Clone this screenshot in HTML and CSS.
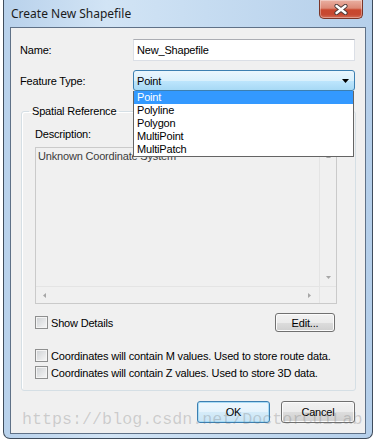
FILE: index.html
```html
<!DOCTYPE html>
<html lang="en">
<head>
    <meta charset="UTF-8">
    <meta name="viewport" content="width=device-width, initial-scale=1.0">
    <title>Create New Shapefile</title>
    <link rel="stylesheet" href="styles.css">
</head>
<body>
    <div class="window">
        <div class="titlebar">
            <span class="title">Create New Shapefile</span>
            <div class="close-btn">
                <svg width="14" height="11" viewBox="0 0 14 11">
                    <path d="M2.5 2 L11.5 9 M11.5 2 L2.5 9" stroke="#4a3a38" stroke-width="4.2" stroke-linecap="round"/>
                    <path d="M2.5 2 L11.5 9 M11.5 2 L2.5 9" stroke="#fff" stroke-width="2.4" stroke-linecap="round"/>
                </svg>
            </div>
        </div>
        <div class="client">
            <div class="field-row">
                <label class="field-label" for="name">Name:</label>
                <div class="textbox" id="name">New_Shapefile</div>
            </div>
            <div class="field-row type-row">
                <label class="field-label">Feature Type:</label>
                <div class="combo">
                    <span>Point</span>
                    <svg class="combo-arrow" width="7" height="4" viewBox="0 0 7 4">
                        <path d="M0 0 H7 L3.5 4 Z" fill="#000"/>
                    </svg>
                    <ul class="droplist">
                        <li class="selected">Point</li>
                        <li>Polyline</li>
                        <li>Polygon</li>
                        <li>MultiPoint</li>
                        <li>MultiPatch</li>
                    </ul>
                </div>
            </div>
            <fieldset class="group">
                <legend>Spatial Reference</legend>
                <div class="desc-label">Description:</div>
                <div class="desc-box">
                    <div class="desc-main">
                        <div class="desc-text">Unknown Coordinate System</div>
                        <div class="vscroll">
                            <svg width="5" height="3" viewBox="0 0 5 3"><path d="M0 3 H5 L2.5 0 Z" fill="#a6a6a6"/></svg>
                            <svg width="5" height="3" viewBox="0 0 5 3"><path d="M0 0 H5 L2.5 3 Z" fill="#a6a6a6"/></svg>
                        </div>
                    </div>
                    <div class="hscroll-row">
                        <div class="hscroll">
                            <svg width="3" height="5" viewBox="0 0 3 5"><path d="M3 0 V5 L0 2.5 Z" fill="#a6a6a6"/></svg>
                            <svg width="3" height="5" viewBox="0 0 3 5"><path d="M0 0 V5 L3 2.5 Z" fill="#a6a6a6"/></svg>
                        </div>
                        <div class="corner"></div>
                    </div>
                </div>
                <div class="details-row">
                    <label class="check"><span class="box"></span>Show Details</label>
                    <button class="btn edit-btn">Edit...</button>
                </div>
                <label class="check m-row"><span class="box"></span>Coordinates will contain M values. Used to store route data.</label>
                <label class="check"><span class="box"></span>Coordinates will contain Z values. Used to store 3D data.</label>
            </fieldset>
            <div class="dialog-buttons">
                <button class="btn ok-btn">OK</button>
                <button class="btn cancel-btn">Cancel</button>
            </div>
        </div>
        <div class="watermark">https://blog.csdn.net/DoctorCuiLab</div>
    </div>
</body>
</html>
```

FILE: styles.css
```css
body {
    margin: 0;
    background: #fff;
    font-family: "Liberation Sans", Arial, sans-serif;
    font-size: 11px;
    letter-spacing: -0.18px;
    color: #000;
}
.window {
    position: relative;
    box-sizing: border-box;
    width: 370px;
    height: 439px;
    margin-left: 3px;
    padding: 0 6px 4px;
    border: 1px solid #3f4c5c;
    border-top: none;
    border-radius: 0 0 7px 7px;
    background: linear-gradient(to right, #b8d1eb, #d2e4f5 28%, #c6dcf1 55%, #b5cfea);
}
.titlebar {
    height: 27px;
    display: flex;
    justify-content: space-between;
    align-items: flex-start;
}
.title {
    padding: 5px 0 0 1px;
    font-family: "Noto Sans", sans-serif;
    font-size: 12px;
    letter-spacing: 0;
    color: #1b1b1b;
}
.close-btn {
    width: 44px;
    height: 19px;
    box-sizing: border-box;
    margin-right: 3px;
    display: flex;
    align-items: center;
    justify-content: center;
    border: 1px solid #7a3528;
    border-top: none;
    border-radius: 0 0 5px 5px;
    background: linear-gradient(#eab0a2 0%, #dc8a77 45%, #c9472e 55%, #c64831 80%, #d46d55 100%);
    box-shadow: inset 0 0 0 1px rgba(255, 255, 255, 0.35);
}
.client {
    box-sizing: border-box;
    height: 407px;
    padding: 11px 10px 0 9px;
    border: 1px solid #5f7187;
    background: #f0f0f0;
}
.field-row {
    display: flex;
    align-items: center;
    height: 22px;
}
.type-row {
    height: 21px;
    margin-top: 9px;
}
.field-label {
    width: 113px;
}
.textbox {
    box-sizing: border-box;
    width: 222px;
    height: 22px;
    padding: 3px 3px 0;
    line-height: 15px;
    background: #fff;
    border: 1px solid #dbdfe6;
    border-top-color: #abadb3;
}
.combo {
    position: relative;
    box-sizing: border-box;
    width: 222px;
    height: 21px;
    padding: 0 5px 0 3px;
    display: flex;
    align-items: center;
    justify-content: space-between;
    border: 1px solid #3c7fb1;
    border-radius: 3px;
    background: linear-gradient(#eaf6fd 0%, #d9f0fc 50%, #bee6fd 50%, #a7d9f5 100%);
}
.droplist {
    position: absolute;
    top: calc(100% + 1px);
    left: -1px;
    right: 0;
    margin: 0;
    padding: 0;
    list-style: none;
    background: #fff;
    border: 1px solid #646464;
    border-top: none;
    z-index: 2;
}
.droplist li {
    height: 13px;
    line-height: 13px;
    padding-left: 3px;
}
.droplist .selected {
    background: #3399ff;
    color: #fff;
}
.group {
    margin: 14px -1px 0 1px;
    padding: 10px 18px 9px 13px;
    border: 1px solid #d5dfe5;
    border-radius: 3px;
    box-shadow: inset 1px 1px 0 #fff;
}
.group legend {
    margin-left: -6px;
    padding: 0 3px;
    line-height: 13px;
}
.desc-label {
    line-height: 13px;
}
.desc-box {
    box-sizing: border-box;
    height: 157px;
    margin-top: 6px;
    display: flex;
    flex-direction: column;
    border: 1px solid #cacaca;
    background: #f0f0f0;
}
.desc-main {
    flex: 1;
    display: flex;
}
.desc-text {
    flex: 1;
    padding: 2px 2px 0;
    line-height: 13px;
    color: #3c3c3c;
}
.vscroll {
    width: 16px;
    border-left: 1px solid #e4e4e4;
    display: flex;
    flex-direction: column;
    justify-content: space-between;
    align-items: center;
    padding: 7px 0 7px;
}
.hscroll-row {
    height: 16px;
    display: flex;
    border-top: 1px solid #e4e4e4;
}
.hscroll {
    flex: 1;
    display: flex;
    justify-content: space-between;
    align-items: center;
    padding: 0 8px 0 7px;
}
.corner {
    width: 16px;
    border-left: 1px solid #e4e4e4;
}
.details-row {
    margin-top: 9px;
    height: 19px;
    display: flex;
    align-items: center;
    justify-content: space-between;
}
.check {
    display: flex;
    align-items: center;
    height: 17px;
    white-space: nowrap;
}
.m-row {
    margin-top: 15px;
}
.box {
    box-sizing: border-box;
    flex: none;
    width: 13px;
    height: 13px;
    margin-right: 3px;
    border: 1px solid #8e8f8f;
    background: linear-gradient(135deg, #cdd0d3, #f7f7f7);
    box-shadow: inset 0 0 0 1px #f4f4f4;
}
.btn {
    box-sizing: border-box;
    padding: 0;
    font-family: "Liberation Sans", Arial, sans-serif;
    font-size: 11px;
    letter-spacing: -0.18px;
    color: #000;
    border: 1px solid #707070;
    border-radius: 3px;
    background: linear-gradient(#f2f2f2 0%, #ebebeb 50%, #dddddd 50%, #cfcfcf 100%);
    box-shadow: inset 0 0 0 1px #fbfbfb;
}
.edit-btn {
    width: 60px;
    height: 19px;
    margin-right: 2px;
}
.dialog-buttons {
    margin-top: 10px;
    display: flex;
    justify-content: flex-end;
    gap: 11px;
}
.ok-btn, .cancel-btn {
    height: 22px;
}
.ok-btn {
    width: 73px;
    border-color: #3c7fb1;
    background: linear-gradient(#eef7fd 0%, #e5f3fc 50%, #d6ecf9 50%, #c9e4f5 100%);
    box-shadow: inset 0 0 0 1px #a9dcf6;
}
.cancel-btn {
    width: 74px;
}
.watermark {
    position: absolute;
    left: 18px;
    top: 410px;
    line-height: 20px;
    font-family: "Liberation Mono", monospace;
    font-size: 16.7px;
    letter-spacing: 0;
    color: rgba(110, 110, 110, 0.28);
    pointer-events: none;
    white-space: nowrap;
}
```
